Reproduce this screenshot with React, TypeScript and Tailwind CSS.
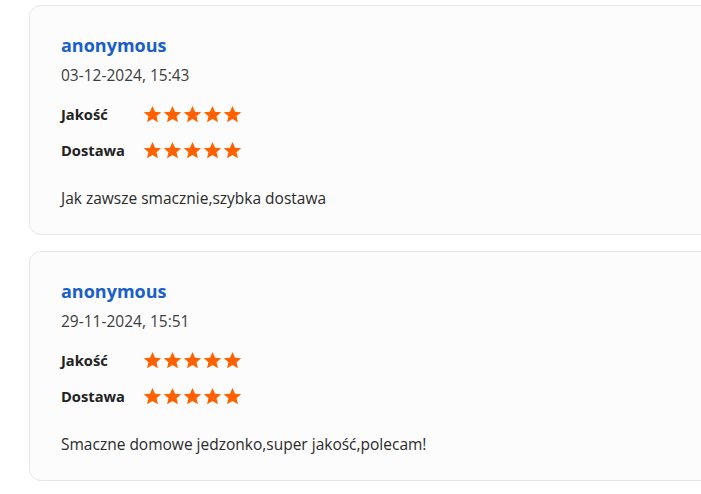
const REVIEWS = [
  { name: 'anonymous', date: '03-12-2024, 15:43', quality: 5, delivery: 5, text: 'Jak zawsze smacznie,szybka dostawa' },
  { name: 'anonymous', date: '29-11-2024, 15:51', quality: 5, delivery: 5, text: 'Smaczne domowe jedzonko,super jakość,polecam!' },
]

function Star() {
  return (
    <svg viewBox="0 0 24 24" className="w-[19px] h-[19px]" fill="#ff6000">
      <path d="M12 1.2l3.2 7.2 7.8.6-5.9 5.1 1.8 7.7L12 17.8l-6.9 4 1.8-7.7L1 9l7.8-.6z" />
    </svg>
  )
}

function Stars({ n }: { n: number }) {
  return (
    <div className="flex gap-[1px]">
      {Array.from({ length: n }).map((_, i) => <Star key={i} />)}
    </div>
  )
}

export default function App() {
  return (
    <div className="w-[701px] h-[494px] bg-white overflow-hidden pl-[29px] pt-[5px]" style={{ fontFamily: '"Open Sans", "Noto Sans", sans-serif' }}>
      <div className="flex flex-col gap-[16px] w-[720px]">
        {REVIEWS.map((r, i) => (
          <div key={i} className="rounded-[12px] border border-[#e6e6e6] bg-[#fcfcfc] pl-[31px] pt-[27px] pb-[26px]">
            <p className="text-[18px] font-bold text-[#1a5fc9] leading-[24px]">{r.name}</p>
            <p className="text-[15.5px] text-[#3c3c3c] leading-[20px] mt-[8px]">{r.date}</p>
            <div className="flex items-center mt-[19px] h-[20px]">
              <span className="w-[82px] text-[14.7px] font-bold text-[#222]">Jakość</span>
              <Stars n={r.quality} />
            </div>
            <div className="flex items-center mt-[16px] h-[20px]">
              <span className="w-[82px] text-[14.7px] font-bold text-[#222]">Dostawa</span>
              <Stars n={r.delivery} />
            </div>
            <p className="text-[15.5px] text-[#2a2a2a] leading-[20px] mt-[28px]">{r.text}</p>
          </div>
        ))}
      </div>
    </div>
  )
}
